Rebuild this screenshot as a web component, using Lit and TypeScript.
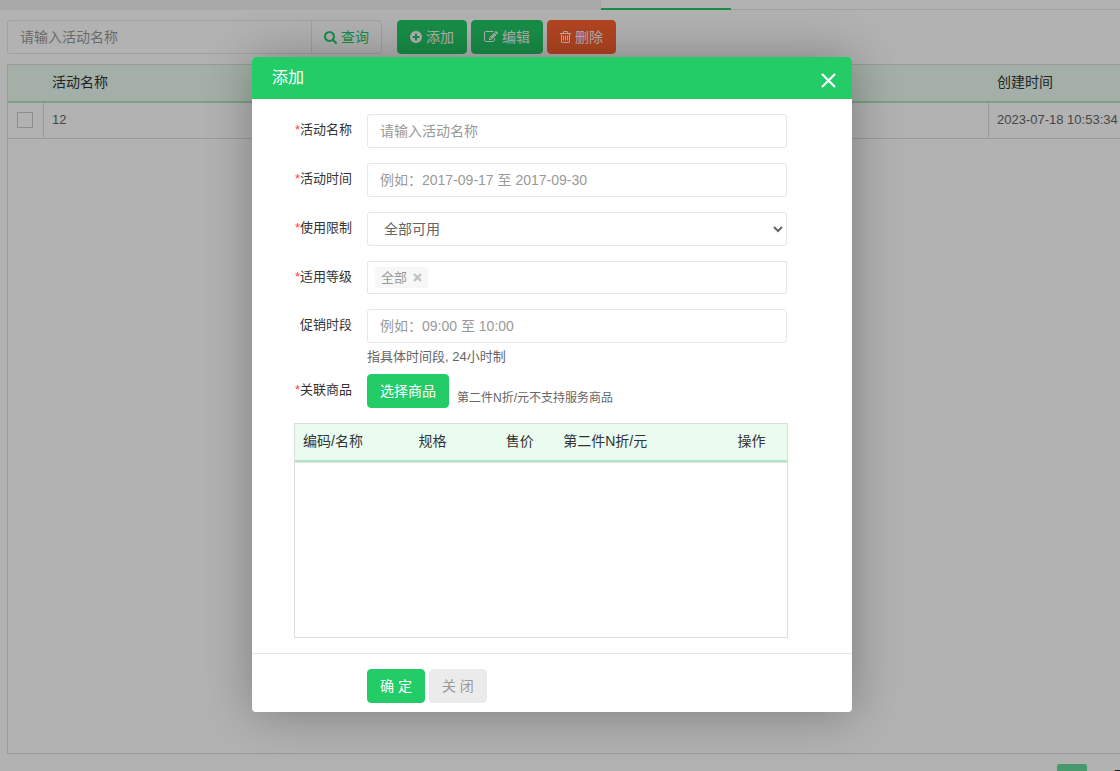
import { LitElement, html, css, svg } from "lit";
import { customElement, state } from "lit/decorators.js";

const ICONS = {
  search: {
    w: 13,
    box: "64 0 1664 1792",
    d: "M1216 832q0-185-131.500-316.500t-316.500-131.500-316.500 131.500-131.500 316.500 131.500 316.500 316.500 131.500 316.500-131.500 131.500-316.500zm512 832q0 52-38 90t-90 38q-54 0-90-38l-343-342q-179 124-399 124-143 0-273.500-55.500t-225-150-150-225-55.500-273.500 55.500-273.500 150-225 225-150 273.500-55.500 273.500 55.500 225 150 150 225 55.500 273.500q0 220-124 399l343 343q37 37 37 90z",
  },
  plus: {
    w: 12,
    box: "128 0 1536 1792",
    d: "M1344 960v-128q0-26-19-45t-45-19h-256v-256q0-26-19-45t-45-19h-128q-26 0-45 19t-19 45v256h-256q-26 0-45 19t-19 45v128q0 26 19 45t45 19h256v256q0 26 19 45t45 19h128q26 0 45-19t19-45v-256h256q26 0 45-19t19-45zm320-64q0 209-103 385.500t-279.500 279.500-385.500 103-385.500-103-279.500-279.500-103-385.500 103-385.500 279.500-279.500 385.500-103 385.500 103 279.500 279.500 103 385.500z",
  },
  edit: {
    w: 14,
    box: "0 0 1792 1792",
    d: "M888 1184l116-116-152-152-116 116v56h96v96h56zm440-720q-16-16-33 1l-350 350q-17 17-1 33t33-1l350-350q17-17 1-33zm80 594v190q0 119-84.500 203.500t-203.500 84.500h-832q-119 0-203.500-84.500t-84.500-203.500v-832q0-119 84.500-203.500t203.500-84.500h832q63 0 117 25 15 7 18 23 3 17-9 29l-49 49q-14 14-32 8-23-6-45-6h-832q-66 0-113 47t-47 113v832q0 66 47 113t113 47h832q66 0 113-47t47-113v-126q0-13 9-22l64-64q15-15 35-7t20 29zm-96-738l288 288-672 672h-288v-288zm444 132l-92 92-288-288 92-92q28-28 68-28t68 28l152 152q28 28 28 68t-28 68z",
  },
  trash: {
    w: 11,
    box: "192 0 1408 1792",
    d: "M704 736v576q0 14-9 23t-23 9h-64q-14 0-23-9t-9-23v-576q0-14 9-23t23-9h64q14 0 23 9t9 23zm256 0v576q0 14-9 23t-23 9h-64q-14 0-23-9t-9-23v-576q0-14 9-23t23-9h64q14 0 23 9t9 23zm256 0v576q0 14-9 23t-23 9h-64q-14 0-23-9t-9-23v-576q0-14 9-23t23-9h64q14 0 23 9t9 23zm128 724v-948h-896v948q0 22 7 40.500t14.500 27 10.500 8.500h832q3 0 10.500-8.500t14.500-27 7-40.500zm-672-1076h448l-48-117q-7-9-17-11h-317q-10 2-17 11zm928 32v64q0 14-9 23t-23 9h-96v948q0 83-47 143.500t-113 60.500h-832q-66 0-113-58.500t-47-141.500v-952h-96q-14 0-23-9t-9-23v-64q0-14 9-23t23-9h309l70-167q15-37 54-63t79-26h320q40 0 79 26t54 63l70 167h309q14 0 23 9t9 23z",
  },
};

const icon = (name: keyof typeof ICONS) => {
  const i = ICONS[name];
  return html`<svg class="icon" width=${i.w} height="14" viewBox=${i.box} aria-hidden="true">
    ${svg`<path fill="currentColor" d=${i.d}></path>`}
  </svg>`;
};

@customElement("app-root")
export class AppRoot extends LitElement {
  @state() private open = true;

  static styles = css`
    :host {
      display: block;
      position: relative;
      height: 100vh;
      overflow: hidden;
      background: #fff;
      color: #666;
      font: 13px/20px "Liberation Sans", "Noto Sans CJK SC", sans-serif;
    }
    * {
      box-sizing: border-box;
    }
    button,
    input,
    select {
      margin: 0;
      font: inherit;
      font-size: 14px;
    }
    .page {
      display: flex;
      flex-direction: column;
      height: 100%;
    }
    .tabs {
      display: flex;
      flex: none;
      height: 10px;
    }
    .tabs-left {
      width: 601px;
      background: #f3f3f3;
    }
    .tab-active {
      width: 130px;
      border-bottom: 2px solid #23cc67;
    }
    .tabs-rest {
      flex: 1;
      border-bottom: 1px solid #e7e7e7;
    }
    .toolbar {
      display: flex;
      gap: 15px;
      padding: 10px 7px;
    }
    .search {
      display: flex;
      width: 375px;
    }
    .field {
      display: block;
      width: 100%;
      height: 34px;
      padding: 0 12px;
      border: 1px solid #e5e6e7;
      border-radius: 3px;
      background: #fff;
      color: #666;
      outline: none;
    }
    .field::placeholder {
      color: #999;
      opacity: 1;
    }
    .search .field {
      flex: 1;
      border-radius: 3px 0 0 3px;
    }
    .actions {
      display: flex;
      gap: 4px;
    }
    .btn {
      display: inline-flex;
      align-items: center;
      gap: 4px;
      height: 34px;
      padding: 0 12px;
      border: 1px solid #23cc67;
      border-radius: 4px;
      background: #23cc67;
      color: #fff;
      white-space: nowrap;
    }
    .btn.query {
      margin-left: -1px;
      border-color: #e5e6e7;
      border-radius: 0 4px 4px 0;
      background: #fff;
      color: #23cc67;
    }
    .btn.danger {
      border-color: #ff6330;
      background: #ff6330;
    }
    .btn.muted {
      border-color: #ebebeb;
      background: #ebebeb;
      color: #999;
    }
    .icon {
      flex: none;
    }
    .list {
      flex: 1;
      margin-left: 7px;
      border: 1px solid #ddd;
      border-right: 0;
    }
    table {
      width: 100%;
      border-collapse: separate;
      border-spacing: 0;
      table-layout: fixed;
    }
    th {
      height: 38px;
      padding: 0 8px 2px;
      border-bottom: 2px solid #b0e4c6;
      background: #eafbf0;
      color: #333;
      font-size: 14px;
      font-weight: 400;
      text-align: left;
      white-space: nowrap;
    }
    .list td {
      height: 36px;
      padding: 0 8px 2px;
      border-right: 1px solid #ddd;
      border-bottom: 1px solid #ddd;
      white-space: nowrap;
    }
    .list td:last-child {
      border-right: 0;
    }
    .col-check {
      width: 36px;
    }
    .col-time {
      width: 131px;
    }
    .check {
      display: block;
      appearance: none;
      width: 16px;
      height: 16px;
      margin: 1px 0 0 1px;
      border: 1px solid #ccc;
      background: #fff;
    }
    .pager {
      display: flex;
      flex: none;
      justify-content: flex-end;
      gap: 16px;
      height: 17px;
      padding-top: 10px;
      overflow: hidden;
    }
    .page-current {
      width: 30px;
      height: 30px;
      padding: 0;
      border: 0;
      border-radius: 2px;
      background: #65dd9a;
      color: #fff;
      line-height: 30px;
    }
    .page-total {
      width: 17px;
      padding-top: 2px;
      overflow: hidden;
      color: #333;
      white-space: nowrap;
    }
    .shade {
      position: absolute;
      inset: 0;
      display: flex;
      align-items: center;
      justify-content: center;
      padding: 0 16px 2px 0;
      background: rgba(0, 0, 0, 0.3);
    }
    .dialog {
      width: 600px;
      border-radius: 4px;
      background: #fff;
      box-shadow: 1px 1px 50px rgba(0, 0, 0, 0.3);
    }
    .dialog-head {
      display: flex;
      align-items: center;
      justify-content: space-between;
      height: 42px;
      padding: 0 16px 0 20px;
      border-radius: 4px 4px 0 0;
      background: #23cc67;
      color: #fff;
    }
    .dialog-head h2 {
      margin: 0;
      font-size: 16px;
      font-weight: 400;
    }
    .close {
      display: flex;
      padding: 4px 0 0;
      border: 0;
      background: none;
      color: #fff;
    }
    .form {
      padding: 15px 65px 15px 42px;
    }
    .row {
      display: grid;
      grid-template-columns: 58px 1fr;
      column-gap: 15px;
      margin-bottom: 15px;
    }
    .row.tight {
      margin-bottom: 7px;
    }
    .label {
      padding-top: 6px;
      color: #333;
      text-align: right;
    }
    .req {
      color: #f44;
    }
    select.field {
      padding: 0 0 0 12px;
    }
    .tags {
      display: flex;
      align-items: center;
      height: 33px;
      padding: 0 7px;
      border: 1px solid #e5e6e7;
      border-radius: 2px;
    }
    .tag {
      display: flex;
      align-items: center;
      gap: 6px;
      height: 21px;
      padding: 0 6px;
      border-radius: 2px;
      background: #f7f7f7;
      color: #999;
    }
    .tag button {
      display: flex;
      padding: 0;
      border: 0;
      background: none;
      color: #c2c2c2;
    }
    .hint {
      margin: 4px 0 0;
    }
    .pick {
      display: flex;
      align-items: flex-end;
      gap: 8px;
    }
    .note {
      font-size: 12px;
    }
    .goods {
      height: 215px;
      margin-right: -1px;
      border: 1px solid #ddd;
    }
    .goods table {
      border-bottom: 1px solid #e5e5e5;
    }
    .w4 {
      width: 23.5%;
    }
    .w3 {
      width: 17.7%;
    }
    .w2 {
      width: 11.7%;
    }
    .w6 {
      width: 35.4%;
    }
    .dialog-foot {
      display: flex;
      gap: 4px;
      padding: 15px 0 9px 115px;
      border-top: 1px solid #e5e5e5;
    }
  `;

  private label(id: string, text: string, required = true) {
    return html`<label class="label" for=${id}
      >${required ? html`<span class="req">*</span>` : ""}${text}</label
    >`;
  }

  private close() {
    this.open = false;
  }

  private renderDialog() {
    return html`<div class="shade">
      <section class="dialog" role="dialog" aria-modal="true" aria-labelledby="title">
        <header class="dialog-head">
          <h2 id="title">添加</h2>
          <button class="close" aria-label="关闭" @click=${this.close}>
            <svg width="15" height="15" viewBox="0 0 15 15">
              <path d="M1 1l13 13M14 1L1 14" stroke="currentColor" stroke-width="2.2" />
            </svg>
          </button>
        </header>
        <div class="form">
          <div class="row">
            ${this.label("name", "活动名称")}
            <input class="field" id="name" type="text" placeholder="请输入活动名称" />
          </div>
          <div class="row">
            ${this.label("date", "活动时间")}
            <input class="field" id="date" type="text" placeholder="例如：2017-09-17 至 2017-09-30" />
          </div>
          <div class="row">
            ${this.label("limit", "使用限制")}
            <select class="field" id="limit">
              <option>全部可用</option>
            </select>
          </div>
          <div class="row">
            ${this.label("level", "适用等级")}
            <div class="tags">
              <span class="tag"
                >全部<button id="level" aria-label="移除">
                  <svg width="9" height="9" viewBox="0 0 9 9">
                    <path d="M1 1l7 7M8 1L1 8" stroke="currentColor" stroke-width="2.4" />
                  </svg></button
              ></span>
            </div>
          </div>
          <div class="row tight">
            ${this.label("period", "促销时段", false)}
            <div>
              <input class="field" id="period" type="text" placeholder="例如：09:00 至 10:00" />
              <p class="hint">指具体时间段, 24小时制</p>
            </div>
          </div>
          <div class="row">
            ${this.label("pick", "关联商品")}
            <div class="pick">
              <button class="btn" id="pick">选择商品</button>
              <span class="note">第二件N折/元不支持服务商品</span>
            </div>
          </div>
          <div class="goods">
            <table>
              <thead>
                <tr>
                  <th class="w4">编码/名称</th>
                  <th class="w3">规格</th>
                  <th class="w2">售价</th>
                  <th class="w6">第二件N折/元</th>
                  <th class="w2">操作</th>
                </tr>
              </thead>
            </table>
          </div>
        </div>
        <footer class="dialog-foot">
          <button class="btn">确 定</button>
          <button class="btn muted" @click=${this.close}>关 闭</button>
        </footer>
      </section>
    </div>`;
  }

  render() {
    return html`
      <main class="page">
        <nav class="tabs">
          <div class="tabs-left"></div>
          <div class="tab-active"></div>
          <div class="tabs-rest"></div>
        </nav>
        <div class="toolbar">
          <div class="search">
            <input class="field" type="text" aria-label="活动名称" placeholder="请输入活动名称" />
            <button class="btn query">${icon("search")}查询</button>
          </div>
          <div class="actions">
            <button class="btn" @click=${() => (this.open = true)}>${icon("plus")}添加</button>
            <button class="btn">${icon("edit")}编辑</button>
            <button class="btn danger">${icon("trash")}删除</button>
          </div>
        </div>
        <div class="list">
          <table>
            <thead>
              <tr>
                <th class="col-check"></th>
                <th>活动名称</th>
                <th class="col-time">创建时间</th>
              </tr>
            </thead>
            <tbody>
              <tr>
                <td><input class="check" type="checkbox" aria-label="12" /></td>
                <td>12</td>
                <td>2023-07-18 10:53:34</td>
              </tr>
            </tbody>
          </table>
        </div>
        <footer class="pager">
          <button class="page-current">1</button>
          <span class="page-total">1 页</span>
        </footer>
      </main>
      ${this.open ? this.renderDialog() : ""}
    `;
  }
}
